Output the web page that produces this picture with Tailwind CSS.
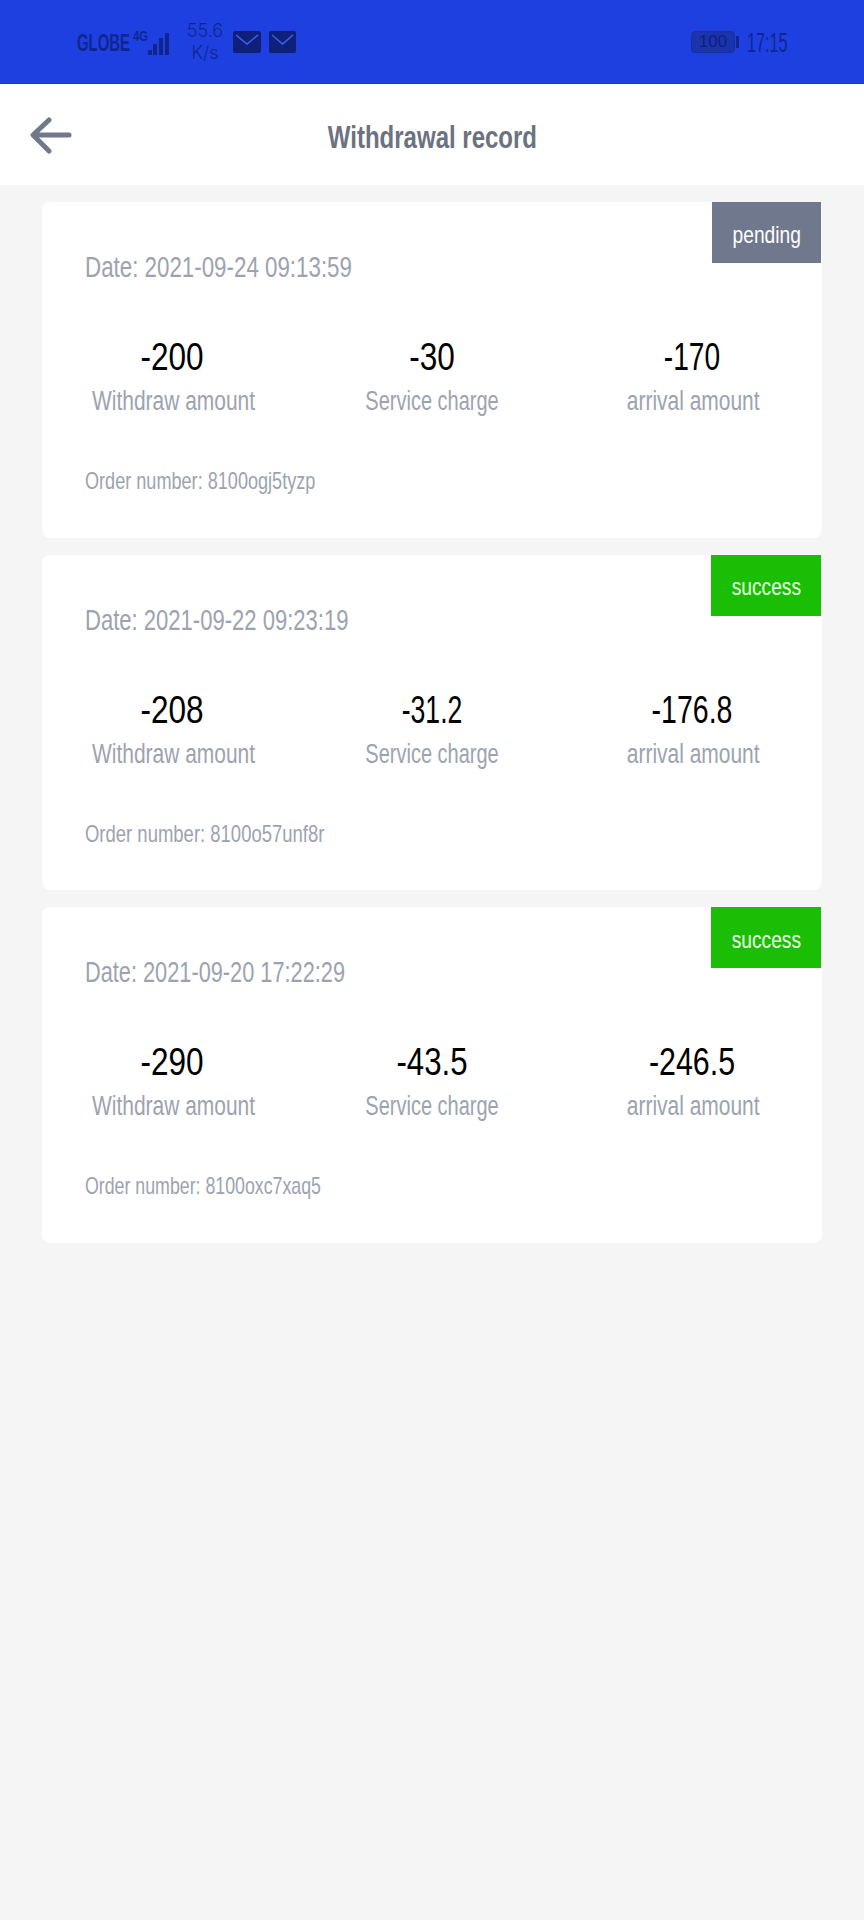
<!DOCTYPE html>
<html lang="en">
<head>
    <title>Withdrawal record</title>
    <meta charset="UTF-8" />
    <meta name="viewport" content="width=device-width, initial-scale=1.0"/>
    <script src="https://cdn.jsdelivr.net/npm/@tailwindcss/browser@4"></script>
</head>
<body class="bg-[#f5f5f5] h-[1920px] w-[864px] overflow-hidden font-['Liberation_Sans',sans-serif]">

    <!-- Status bar -->
    <div class="h-[84px] bg-[#1e40e0] border-b border-[#1c3bb8] flex items-center text-[#10268f]">
        <div class="pl-[77px] flex items-center w-[691px]">
            <span class="w-[52px] mt-[3px] text-[24px] leading-none font-bold inline-block origin-left scale-x-[.62]">GLOBE</span>
            <svg class="ml-[3px]" width="42" height="32" viewBox="0 0 42 32">
                <text x="1" y="15" font-size="14" font-weight="700" fill="#10268f" font-family="Liberation Sans" textLength="15" lengthAdjust="spacingAndGlyphs">4G</text>
                <rect x="16" y="24" width="4" height="5" fill="#10268f"/>
                <rect x="21" y="18" width="4" height="11" fill="#10268f"/>
                <rect x="27" y="12" width="4" height="17" fill="#10268f"/>
                <rect x="33" y="7" width="4" height="22" fill="#10268f"/>
            </svg>
            <div class="ml-[12px] w-[38px] text-center text-[18px] leading-[22px] font-['Inter',sans-serif] font-light">55.6<br>K/s</div>
            <svg class="ml-[9px]" width="28" height="22" viewBox="0 0 28 22"><rect width="28" height="22" rx="2" fill="#0f1f7c"/><path d="M3 4l11 9L25 4" fill="none" stroke="#3f62e8" stroke-width="1.5"/></svg>
            <svg class="ml-[8px]" width="27" height="22" viewBox="0 0 27 22"><rect width="27" height="22" rx="2" fill="#0f1f7c"/><path d="M3 4l10.5 9L24 4" fill="none" stroke="#3f62e8" stroke-width="1.5"/></svg>
        </div>
        <div class="flex items-center">
            <div class="w-[44px] h-[22px] rounded-[4px] border border-[#1a2f9e] bg-[#1b34ad] text-[17px] leading-[20px] text-center text-[#0f1f7c]">100</div>
            <div class="w-[3px] h-[12px] bg-[#10268f] ml-[1px]"></div>
            <span class="ml-[8px] mt-[2px] text-[28px] leading-none inline-block origin-left scale-x-[.58]">17:15</span>
        </div>
    </div>

    <!-- Header -->
    <header class="h-[101px] bg-white flex items-center justify-center relative">
        <svg class="absolute left-[30px] top-[32px]" width="42" height="38" viewBox="0 0 42 38" fill="none" stroke="#6f788c" stroke-width="5" stroke-linecap="round" stroke-linejoin="round">
            <path d="M39 19H4M19 4L3 19l16 16"/>
        </svg>
        <h1 class="text-[#6b7280] text-[32px] font-bold leading-none mt-[4px] scale-x-[.75]">Withdrawal record</h1>
    </header>

    <!-- Records -->
    <main class="px-[42px] pt-[17px] flex flex-col gap-[17px]">

        <section class="relative h-[335.5px] bg-white rounded-[8px]">
            <div class="absolute right-[1px] top-0 w-[109px] h-[61px] bg-[#6f788c] text-white text-[24px] pt-[4px] flex items-center justify-center"><span class="scale-x-[.8]">pending</span></div>
            <div class="pl-[43px] pt-[48px] text-[29px] leading-[34px] text-[#9ca3af]"><span class="inline-block origin-left scale-x-[.77]">Date: 2021-09-24 09:13:59</span></div>
            <div class="grid grid-cols-3 mt-[51px] text-center">
                <div><div class="text-[38px] leading-[44px] text-black scale-x-[.83]">-200</div><div class="text-[27px] leading-[36px] text-[#9ca3af] mt-[4px] pl-[4px] scale-x-[.776]">Withdraw amount</div></div>
                <div><div class="text-[38px] leading-[44px] text-black scale-x-[.83]">-30</div><div class="text-[27px] leading-[36px] text-[#9ca3af] mt-[4px] scale-x-[.74]">Service charge</div></div>
                <div><div class="text-[38px] leading-[44px] text-black scale-x-[.74]">-170</div><div class="text-[27px] leading-[36px] text-[#9ca3af] mt-[4px] pl-[3px] scale-x-[.776]">arrival amount</div></div>
            </div>
            <div class="pl-[43px] mt-[48px] text-[24px] leading-[28px] text-[#9ca3af]"><span class="inline-block origin-left scale-x-[.754]">Order number: 8100ogj5tyzp</span></div>
        </section>

        <section class="relative h-[335.5px] bg-white rounded-[8px]">
            <div class="absolute right-[1px] top-0 w-[110px] h-[61px] bg-[#1abf05] text-[#f0ffea] text-[24px] pt-[4px] flex items-center justify-center"><span class="scale-x-[.8]">success</span></div>
            <div class="pl-[43px] pt-[48px] text-[29px] leading-[34px] text-[#9ca3af]"><span class="inline-block origin-left scale-x-[.76]">Date: 2021-09-22 09:23:19</span></div>
            <div class="grid grid-cols-3 mt-[51px] text-center">
                <div><div class="text-[38px] leading-[44px] text-black scale-x-[.83]">-208</div><div class="text-[27px] leading-[36px] text-[#9ca3af] mt-[4px] pl-[4px] scale-x-[.776]">Withdraw amount</div></div>
                <div><div class="text-[38px] leading-[44px] text-black scale-x-[.7]">-31.2</div><div class="text-[27px] leading-[36px] text-[#9ca3af] mt-[4px] scale-x-[.74]">Service charge</div></div>
                <div><div class="text-[38px] leading-[44px] text-black scale-x-[.75]">-176.8</div><div class="text-[27px] leading-[36px] text-[#9ca3af] mt-[4px] pl-[3px] scale-x-[.776]">arrival amount</div></div>
            </div>
            <div class="pl-[43px] mt-[48px] text-[24px] leading-[28px] text-[#9ca3af]"><span class="inline-block origin-left scale-x-[.77]">Order number: 8100o57unf8r</span></div>
        </section>

        <section class="relative h-[335.5px] bg-white rounded-[8px]">
            <div class="absolute right-[1px] top-0 w-[110px] h-[61px] bg-[#1abf05] text-[#f0ffea] text-[24px] pt-[4px] flex items-center justify-center"><span class="scale-x-[.8]">success</span></div>
            <div class="pl-[43px] pt-[48px] text-[29px] leading-[34px] text-[#9ca3af]"><span class="inline-block origin-left scale-x-[.75]">Date: 2021-09-20 17:22:29</span></div>
            <div class="grid grid-cols-3 mt-[51px] text-center">
                <div><div class="text-[38px] leading-[44px] text-black scale-x-[.83]">-290</div><div class="text-[27px] leading-[36px] text-[#9ca3af] mt-[4px] pl-[4px] scale-x-[.776]">Withdraw amount</div></div>
                <div><div class="text-[38px] leading-[44px] text-black scale-x-[.82]">-43.5</div><div class="text-[27px] leading-[36px] text-[#9ca3af] mt-[4px] scale-x-[.74]">Service charge</div></div>
                <div><div class="text-[38px] leading-[44px] text-black scale-x-[.8]">-246.5</div><div class="text-[27px] leading-[36px] text-[#9ca3af] mt-[4px] pl-[3px] scale-x-[.776]">arrival amount</div></div>
            </div>
            <div class="pl-[43px] mt-[48px] text-[24px] leading-[28px] text-[#9ca3af]"><span class="inline-block origin-left scale-x-[.74]">Order number: 8100oxc7xaq5</span></div>
        </section>

    </main>
</body>
</html>
